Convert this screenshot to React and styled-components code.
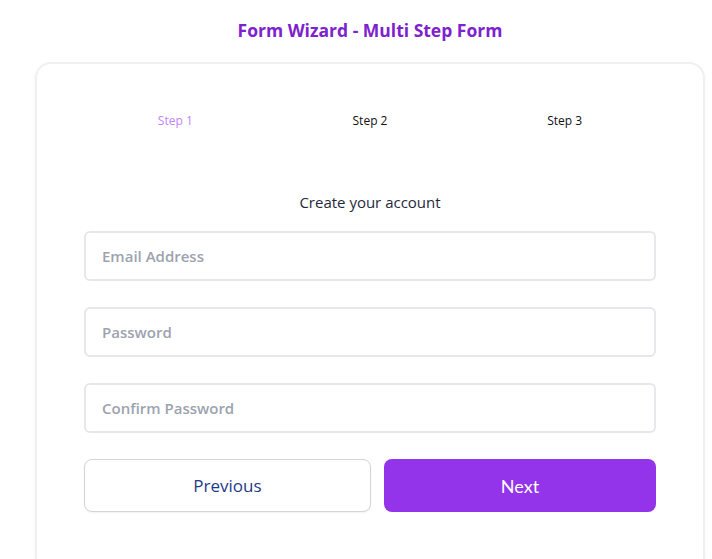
import React, { useState } from "react";
import styled, { createGlobalStyle } from "styled-components";

const GlobalStyle = createGlobalStyle`
  body {
    margin: 0;
    background: #ffffff;
    font-family: "Open Sans", "Noto Sans", Arial, sans-serif;
  }
`;

const steps = ["Step 1", "Step 2", "Step 3"];

const fields = [
  { name: "email", type: "email", placeholder: "Email Address" },
  { name: "password", type: "password", placeholder: "Password" },
  { name: "confirm", type: "password", placeholder: "Confirm Password" },
];

function App() {
  const [current, setCurrent] = useState(0);

  return (
    <Page>
      <GlobalStyle />
      <Title>Form Wizard - Multi Step Form</Title>
      <Card>
        <StepBar>
          {steps.map((s, i) => (
            <StepLabel key={s} active={i === current}>
              {s}
            </StepLabel>
          ))}
        </StepBar>
        <Heading>Create your account</Heading>
        <Fields>
          {fields.map((f) => (
            <Input key={f.name} type={f.type} placeholder={f.placeholder} />
          ))}
        </Fields>
        <Actions>
          <Button onClick={() => setCurrent(Math.max(0, current - 1))}>
            Previous
          </Button>
          <Button
            primary
            onClick={() => setCurrent(Math.min(steps.length - 1, current + 1))}
          >
            Next
          </Button>
        </Actions>
      </Card>
    </Page>
  );
}

export default App;

const Page = styled.div`
  width: 670px;
  margin-left: 35px;
  display: flex;
  flex-direction: column;
  min-height: 559px;
`;

const Title = styled.h1`
  margin: 0;
  height: 62px;
  display: flex;
  align-items: center;
  justify-content: center;
  padding-bottom: 2px;
  box-sizing: border-box;
  font-size: 17.5px;
  font-weight: 700;
  color: #7e22ce;
`;

const Card = styled.div`
  flex: 1;
  border: 2px solid #f0f0f0;
  border-bottom: none;
  border-radius: 16px 16px 0 0;
  padding: 49px 47px 40px;
  box-shadow: 0 1px 4px rgba(0, 0, 0, 0.04);
`;

const StepBar = styled.div`
  display: grid;
  grid-template-columns: repeat(3, 1fr);
  margin: 0 -6px;
`;

const StepLabel = styled.div`
  text-align: center;
  font-size: 12px;
  line-height: 16px;
  color: ${(p) => (p.active ? "#c084fc" : "#111111")};
`;

const Heading = styled.div`
  text-align: center;
  font-size: 15px;
  color: #1e293b;
  margin-top: 63px;
  line-height: 20px;
`;

const Fields = styled.div`
  display: flex;
  flex-direction: column;
  gap: 26px;
  margin-top: 19px;
`;

const Input = styled.input`
  height: 50px;
  box-sizing: border-box;
  border: 2px solid #e5e7eb;
  border-radius: 6px;
  padding: 0 16px;
  font-family: inherit;
  font-size: 15px;
  font-weight: 600;
  color: #374151;
  outline: none;

  &::placeholder {
    color: #9ca3af;
  }
`;

const Actions = styled.div`
  display: grid;
  grid-template-columns: 287px 1fr;
  gap: 13px;
  margin-top: 26px;
`;

const Button = styled.button`
  height: 53px;
  border-radius: 8px;
  font-family: ${(p) => (p.primary ? "Lato" : "'Open Sans'")}, sans-serif;
  font-size: ${(p) => (p.primary ? "18px" : "17px")};
  cursor: pointer;
  border: ${(p) => (p.primary ? "none" : "1px solid #d1d5db")};
  background: ${(p) => (p.primary ? "#9333ea" : "#ffffff")};
  color: ${(p) => (p.primary ? "#ffffff" : "#1e3a8a")};
  box-shadow: ${(p) => (p.primary ? "none" : "0 1px 2px rgba(0,0,0,0.06)")};
`;
